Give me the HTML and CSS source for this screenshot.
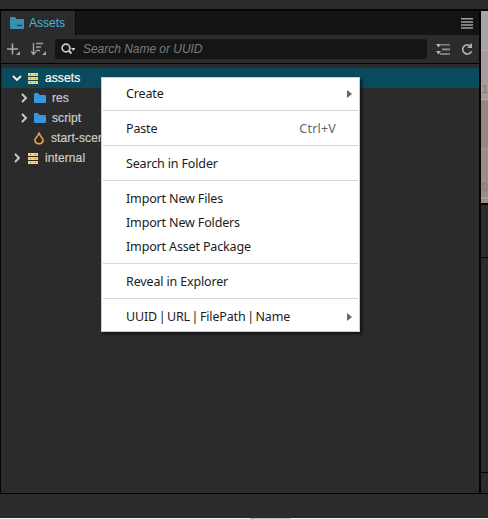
FILE: index.html
```html
<!DOCTYPE html>
<html lang="en">
<head>
<meta charset="utf-8">
<title>Assets</title>
<link rel="stylesheet" href="styles.css">
</head>
<body>
<svg class="defs" width="0" height="0">
  <symbol id="down" viewBox="0 0 12 12"><path d="M2 4l4 4 4-4" fill="none" stroke="#f2f2f2" stroke-width="1.9"/></symbol>
  <symbol id="right" viewBox="0 0 12 12"><path d="M4 2l4 4-4 4" fill="none" stroke="#ccc" stroke-width="1.9"/></symbol>
  <symbol id="db" viewBox="0 0 10 12"><path fill="#f8d468" d="M0 0h10v3H0zM0 4h10v3H0zM0 8h10v3H0z"/><path fill="#8f7b42" d="M2 1h1v1H2zM2 5h1v1H2zM2 9h1v1H2zM7 1h1v1H7zM7 5h1v1H7zM7 9h1v1H7z"/></symbol>
  <symbol id="folder" viewBox="0 0 12 10"><path fill="#3697df" d="M0 1q0-1 1-1h3l1.500 2H11q1 0 1 1v6q0 1-1 1H1q-1 0-1-1z"/></symbol>
</svg>
<div class="app">
  <div class="top"></div>
  <div class="work">
    <section class="panel">
      <header class="tabs">
        <div class="tab">
          <svg width="14" height="12" viewBox="0 0 14 12"><path fill="#3b91ad" d="M0 1q0-1 1-1h4l1.500 2H13q1 0 1 1v8q0 1-1 1H1q-1 0-1-1z"/><path d="M7 8.500h5" stroke="#173b48" stroke-width="1.300"/></svg>
          <span>Assets</span>
        </div>
        <svg class="burger" width="12" height="11" viewBox="0 0 12 11"><path d="M0 .8h12M0 3.900h12M0 7h12M0 10.100h12" stroke="#a0a0a0" stroke-width="1.500"/></svg>
      </header>
      <div class="toolbar">
        <svg width="14" height="14" viewBox="0 0 14 14"><path d="M1 7h11M6.500 1.500v11" stroke="#a8a8a8" stroke-width="1.600"/><path d="M14 9v4h-4z" fill="#a8a8a8"/></svg>
        <svg class="sort" width="16" height="14" viewBox="0 0 16 14"><path d="M2.500 1v11M0 9.500l2.500 3 2.500-3M5 1.500h7M5 5h5M5 8.500h4" fill="none" stroke="#a0a0a0" stroke-width="1.400"/><path d="M15 9v4h-4z" fill="#a8a8a8"/></svg>
        <div class="search">
          <svg width="15" height="12" viewBox="0 0 15 12"><circle cx="5" cy="5" r="3.900" fill="none" stroke="#ccc" stroke-width="1.700"/><path d="M7.500 7.500l3 3" stroke="#ccc" stroke-width="1.900"/><path d="M10 5h4.500l-2.250 3z" fill="#ccc"/></svg>
          <span>Search Name or UUID</span>
        </div>
        <svg class="collapse" width="14" height="11" viewBox="0 0 14 11"><path d="M0 0h5L2.500 3.500zM0 7h5l-2.500 3.500z" fill="#b5b5b5"/><path d="M4 .8h10M4 10h10" stroke="#969696" stroke-width="1.300"/><path d="M6 5.400h8" stroke="#8c8c8c" stroke-width="2"/></svg>
        <svg class="refresh" width="12" height="13" viewBox="0 0 12 13"><path d="M9.700 3.300A4.600 4.600 0 1 0 10.500 8.300" fill="none" stroke="#b0b0b0" stroke-width="1.700"/><path d="M11 0v5H6z" fill="#b0b0b0"/></svg>
      </div>
      <div class="tree">
        <div class="row selected"><svg class="arrow"><use href="#down"/></svg><svg class="db"><use href="#db"/></svg><span>assets</span></div>
        <div class="row child"><svg class="arrow"><use href="#right"/></svg><svg class="folder"><use href="#folder"/></svg><span>res</span></div>
        <div class="row child"><svg class="arrow"><use href="#right"/></svg><svg class="folder"><use href="#folder"/></svg><span>script</span></div>
        <div class="row scene"><svg width="10" height="14" viewBox="0 0 10 14"><path d="M5.200 1.500Q4.700 4 2.300 6.500Q-.5 10 2.500 12Q5 13.500 7.500 12Q10.500 10 7.700 6.500Q5.500 4 5.200 1.500z" fill="none" stroke="#f2a03e" stroke-width="1.600"/></svg><span>start-scene</span></div>
        <div class="row"><svg class="arrow"><use href="#right"/></svg><svg class="db"><use href="#db"/></svg><span>internal</span></div>
      </div>
    </section>
    <aside class="side">
      <div class="scene-view"><span class="one">1</span><span class="zero">0</span></div>
      <div class="side-mid"></div>
      <div class="side-low"></div>
      <div class="side-end"></div>
    </aside>
  </div>
  <footer class="status"></footer>
  <div class="edge"></div>
</div>
<nav class="menu">
  <div class="item"><span>Create</span><i class="more"></i></div>
  <hr>
  <div class="item"><span>Paste</span><kbd>Ctrl+V</kbd></div>
  <hr>
  <div class="item"><span>Search in Folder</span></div>
  <hr>
  <div class="item"><span>Import New Files</span></div>
  <div class="item"><span>Import New Folders</span></div>
  <div class="item"><span>Import Asset Package</span></div>
  <hr>
  <div class="item"><span>Reveal in Explorer</span></div>
  <hr>
  <div class="item"><span class="formats">UUID | URL | FilePath | Name</span><i class="more"></i></div>
</nav>
</body>
</html>
```
FILE: styles.css
```css
* { box-sizing: border-box; }
body { margin: 0; overflow: hidden; background: #2b2b2b; color: #ccc; font: 12px "Liberation Sans", sans-serif; }
svg { display: block; flex: none; }
.defs { position: absolute; }
.app { width: 488px; height: 519px; display: flex; flex-direction: column; }
.top { height: 11px; border-bottom: 2px solid #050505; }
.work { height: 483px; display: flex; border-bottom: 1px solid #050505; }
.panel { width: 481px; border-left: 1px solid #050505; border-right: 2px solid #050505; }
.tabs { height: 24px; display: flex; justify-content: space-between; background: #141414; }
.tab { width: 75px; display: flex; align-items: center; gap: 5px; padding-left: 9px; background: #2b2b2b; color: #4bb4de; border-right: 1px solid #080808; }
.burger { margin: 7px 6px 0 0; }
.toolbar { height: 29px; display: flex; align-items: center; padding-left: 5px; border-bottom: 1px solid #050505; }
.sort { margin-left: 11px; }
.search { width: 372px; height: 20px; margin-left: 8px; display: flex; align-items: center; gap: 7px; padding-left: 6px; border-radius: 3px; background: #151515; color: #7c7c7c; font-style: italic; letter-spacing: -.03px; }
.collapse { margin-left: 9px; }
.refresh { margin-left: 11px; }
.tree { padding: 4px 0 0 1px; }
.row { height: 20px; display: flex; align-items: center; padding-left: 9px; letter-spacing: .1px; -webkit-text-stroke: .2px; }
.selected { background: #094a5d; color: #fff; }
.child { padding-left: 16px; }
.child span { margin-left: 6px; }
.scene { padding-left: 32px; }
.scene span { margin-left: 7px; }
.arrow { width: 12px; height: 12px; }
.db { width: 10px; height: 12px; margin: 1px 7px 0 5px; }
.folder { width: 12px; height: 10px; margin-left: 4px; }
.side { width: 7px; }
.scene-view { height: 194px; border-bottom: 2px solid #050505; overflow: hidden; display: flex; flex-direction: column; padding-left: 1px; color: #777; font-size: 10px; line-height: 14px; background: linear-gradient(#a9a4a4 0 39px, #b0a9a7 39px 40px, #a59d9b 40px 88px, #b8b1ae 88px 89px, #97887f 89px 137px, #a09490 137px 139px, #9b8d84 139px 186px, #a8a09c 186px 188px, #9b8e89 188px); }
.one { margin-top: 72px; }
.zero { margin-top: 84px; }
.side-mid { height: 53px; border-bottom: 1px solid #050505; }
.side-low { height: 215px; border-bottom: 1px solid #050505; }
.side-end { height: 20px; }
.status { height: 24px; }
.edge { height: 1px; background: linear-gradient(90deg, #f4f4f2 0 250px, #8fc58e 250px 254px, #c0c0be 254px 290px, #f4f4f2 290px); }
.menu { position: absolute; left: 101px; top: 77px; width: 259px; height: 255px; padding: 4px 1px 2px; background: #fff; border: 1px solid #ccc; box-shadow: 2px 2px 3px #0009; color: #1b1b1b; font: 12.5px "Noto Sans", sans-serif; letter-spacing: -.15px; }
.item { height: 24px; display: flex; align-items: center; justify-content: space-between; padding: 0 7px 0 23px; white-space: nowrap; }
.item span, kbd { padding-bottom: 1px; }
.menu hr { height: 1px; margin: 4px 0 6px; border: 0; background: #d7d7d7; }
.formats { word-spacing: -1.5px; }
kbd { margin-right: 15px; color: #666; font: inherit; letter-spacing: .2px; }
.more { margin-right: -1px; border-left: 5px solid #666; border-top: 4px solid transparent; border-bottom: 4px solid transparent; }
```
